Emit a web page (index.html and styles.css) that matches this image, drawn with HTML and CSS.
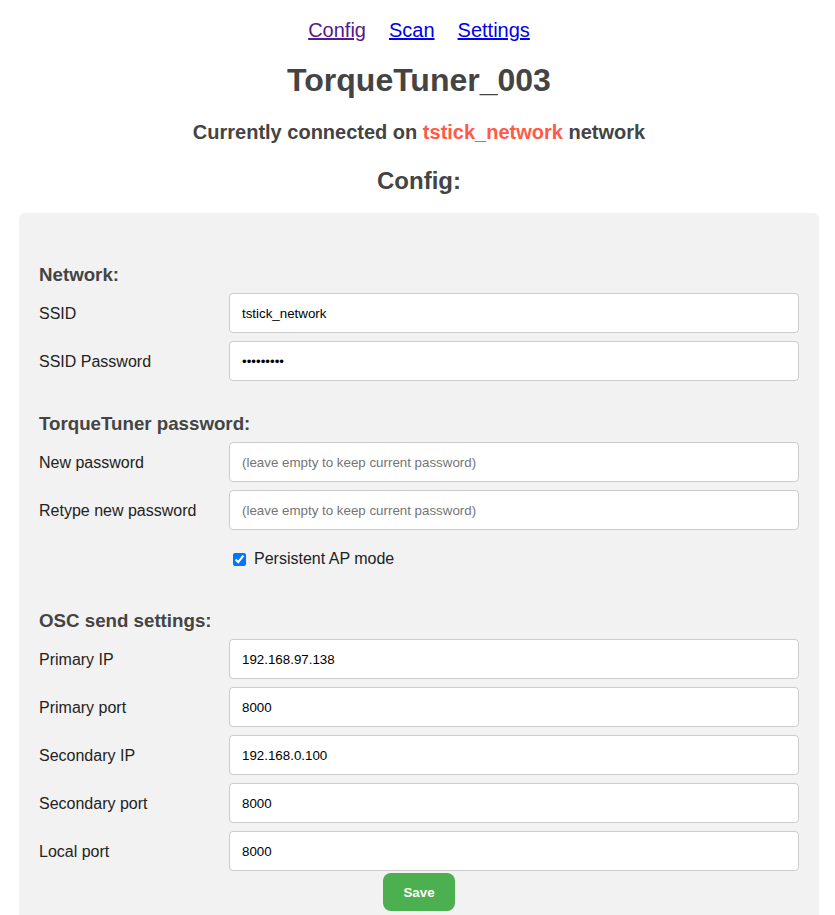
FILE: index.html
```html
<!DOCTYPE html>
<html lang="en">
<head>
<meta charset="utf-8">
<title>TorqueTuner_003</title>
<link rel="stylesheet" href="styles.css">
</head>
<body>
<div class="page">
  <nav class="topnav">
    <a href="#config" class="visited">Config</a>
    <a href="#scan">Scan</a>
    <a href="#settings">Settings</a>
  </nav>
  <h1 class="title">TorqueTuner_003</h1>
  <h3 class="status">Currently connected on <span class="net">tstick_network</span> network</h3>
  <h2 class="section-title">Config:</h2>

  <form class="panel">
    <h3 class="group-title first">Network:</h3>
    <div class="row">
      <label class="lbl">SSID</label>
      <input class="field" type="text" value="tstick_network">
    </div>
    <div class="row">
      <label class="lbl">SSID Password</label>
      <input class="field" type="password" value="password1">
    </div>

    <h3 class="group-title">TorqueTuner password:</h3>
    <div class="row">
      <label class="lbl">New password</label>
      <input class="field" type="password" placeholder="(leave empty to keep current password)">
    </div>
    <div class="row">
      <label class="lbl">Retype new password</label>
      <input class="field" type="password" placeholder="(leave empty to keep current password)">
    </div>
    <div class="row check-row">
      <span></span>
      <label class="check-label"><input type="checkbox" class="check" checked> Persistent AP mode</label>
    </div>

    <h3 class="group-title osc">OSC send settings:</h3>
    <div class="row">
      <label class="lbl">Primary IP</label>
      <input class="field" type="text" value="192.168.97.138">
    </div>
    <div class="row">
      <label class="lbl">Primary port</label>
      <input class="field" type="text" value="8000">
    </div>
    <div class="row">
      <label class="lbl">Secondary IP</label>
      <input class="field" type="text" value="192.168.0.100">
    </div>
    <div class="row">
      <label class="lbl">Secondary port</label>
      <input class="field" type="text" value="8000">
    </div>
    <div class="row">
      <label class="lbl">Local port</label>
      <input class="field" type="text" value="8000">
    </div>
    <div class="actions">
      <button type="button" class="save">Save</button>
    </div>
  </form>
</div>
</body>
</html>
```

FILE: styles.css
```css
html, body {
  margin: 0;
  padding: 0;
  background: #fff;
}

body {
  font-family: "Liberation Sans", Arial, sans-serif;
  color: #444;
}

.page {
  width: 800px;
  margin-left: 19px;
}

.topnav {
  display: flex;
  justify-content: center;
  gap: 23px;
  padding-top: 19px;
  font-size: 20px;
  line-height: 23px;
}

.topnav a {
  color: #0000ee;
  text-decoration: underline;
}

.topnav a.visited {
  color: #551a8b;
}

.title {
  margin: 20px 0 0;
  text-align: center;
  font-size: 32px;
  line-height: 37px;
  font-weight: bold;
  color: #444;
}

.status {
  margin: 22px 0 0;
  text-align: center;
  font-size: 20px;
  line-height: 23px;
  font-weight: bold;
  color: #444;
}

.net {
  color: #ff5a45;
}

.section-title {
  margin: 23px 0 0;
  text-align: center;
  font-size: 24px;
  line-height: 28px;
  font-weight: bold;
  color: #444;
}

.panel {
  margin-top: 18px;
  background: #f2f2f2;
  border-radius: 6px;
  padding: 20px 20px 60px;
  display: flex;
  flex-direction: column;
  gap: 8px;
}

.group-title {
  margin: 24px 0 0;
  font-size: 18.72px;
  line-height: 21px;
  font-weight: bold;
  color: #444;
}

.group-title.first {
  margin-top: 31px;
}

.group-title.osc {
  margin-top: 34px;
}

.row {
  display: grid;
  grid-template-columns: 190px 1fr;
  align-items: center;
}

.lbl {
  padding-top: 2px;
  font-size: 16px;
  line-height: 18px;
  color: #222;
}

.field {
  box-sizing: border-box;
  height: 40px;
  width: 100%;
  margin: 0;
  padding: 0 12px;
  border: 1px solid #ccc;
  border-radius: 4px;
  background: #fff;
  font-family: "Liberation Sans", Arial, sans-serif;
  font-size: 13.33px;
  color: #000;
}

.field::placeholder {
  color: #757575;
}

.check-row {
  margin-top: 12px;
}

.check-label {
  font-size: 16px;
  line-height: 18px;
  color: #222;
  display: flex;
  align-items: center;
  gap: 0;
}

.check {
  width: 13px;
  height: 13px;
  margin: 0 8px 0 4px;
  accent-color: #0075ff;
}

.actions {
  display: flex;
  justify-content: center;
  margin-top: -6px;
}

.save {
  height: 38px;
  padding: 0 20px;
  border: none;
  border-radius: 8px;
  background: #4caf50;
  color: #fff;
  font-family: "Liberation Sans", Arial, sans-serif;
  font-size: 13.33px;
  font-weight: bold;
}
```
